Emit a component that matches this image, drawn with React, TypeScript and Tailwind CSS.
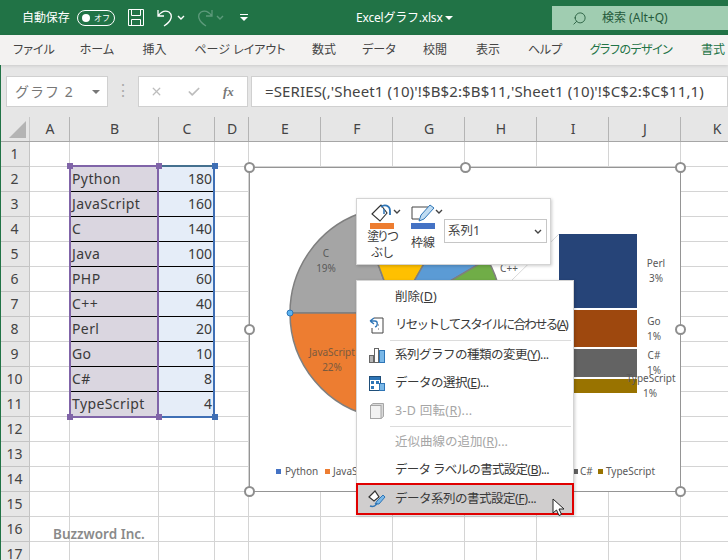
import React from 'react';
import { ChevronDown, Search, X, Check } from 'lucide-react';

const font = `font-['Noto_Sans','Noto_Sans_CJK_JP',sans-serif]`;

const tabs = [
  { label: 'ファイル', w: 'w-[66px]' },
  { label: 'ホーム', w: 'w-[60px]' },
  { label: '挿入', w: 'w-[55px]' },
  { label: 'ページ レイアウト', w: 'w-[116px]' },
  { label: '数式', w: 'w-[52px]' },
  { label: 'データ', w: 'w-[58px]' },
  { label: '校閲', w: 'w-[54px]' },
  { label: '表示', w: 'w-[52px]' },
  { label: 'ヘルプ', w: 'w-[62px]' },
];

const columns = [
  { label: 'A', w: 'w-[40px]' },
  { label: 'B', w: 'w-[89px]' },
  { label: 'C', w: 'w-[56px]' },
  { label: 'D', w: 'w-[34px]' },
  { label: 'E', w: 'w-[72px]' },
  { label: 'F', w: 'w-[72px]' },
  { label: 'G', w: 'w-[72px]' },
  { label: 'H', w: 'w-[72px]' },
  { label: 'I', w: 'w-[72px]' },
  { label: 'J', w: 'w-[72px]' },
  { label: 'K', w: 'w-[72px]' },
];

const data: [string, number][] = [
  ['Python', 180],
  ['JavaScript', 160],
  ['C', 140],
  ['Java', 100],
  ['PHP', 60],
  ['C++', 40],
  ['Perl', 20],
  ['Go', 10],
  ['C#', 8],
  ['TypeScript', 4],
];

const rows = Array.from({ length: 17 }, (_, i) => i + 1);

const cx = 146;
const cy = 145;
const r = 106;

// degrees run clockwise from the left edge of the pie
const slice = (from: number, to: number) => {
  const pt = (deg: number) => {
    const a = ((deg - 180) * Math.PI) / 180;
    return `${(cx + r * Math.cos(a)).toFixed(1)} ${(cy + r * Math.sin(a)).toFixed(1)}`;
  };
  return `M${cx} ${cy} L${pt(from)} A${r} ${r} 0 ${to - from > 180 ? 1 : 0} 1 ${pt(to)} Z`;
};

const pieSlices = [
  { from: 0, to: 69.8, fill: '#a5a5a5' },
  { from: 69.8, to: 119.6, fill: '#ffc000' },
  { from: 119.6, to: 149.5, fill: '#5b9bd5' },
  { from: 149.5, to: 169.4, fill: '#70ad47' },
  { from: 169.4, to: 190.3, fill: '#4472c4' },
  { from: 190.3, to: 280.1, fill: '#4472c4' },
  { from: 280.1, to: 360, fill: '#ed7d31' },
];

const Caret = ({ className = '' }: { className?: string }) => (
  <svg width="8" height="5" viewBox="0 0 8 5" fill="none" stroke="currentColor" strokeWidth="1.4" className={className}>
    <path d="M1 1 L4 4 L7 1" />
  </svg>
);

const Handle = ({ className }: { className: string }) => (
  <div className={`absolute w-[11px] h-[11px] rounded-full bg-white border-2 border-[#8e8e8e] ${className}`} />
);

const RangeDot = ({ className }: { className: string }) => (
  <div className={`absolute w-[6px] h-[6px] ${className}`} />
);

const ChartObject = () => (
  <div className="absolute left-[249px] top-[167px] w-[432px] h-[325px] bg-white border border-[#959595]">
    <svg width="430" height="323" viewBox="0 0 430 323" className="absolute left-0 top-0">
      {pieSlices.map((s) => (
        <path key={s.from} d={slice(s.from, s.to)} fill={s.fill} stroke="#7f7f7f" strokeWidth="1.5" />
      ))}
      <line x1="262" y1="112" x2="309" y2="66" stroke="#d9d9d9" />
      <rect x="309" y="66" width="78" height="74" fill="#264478" />
      <rect x="309" y="142" width="78" height="37" fill="#9e480e" />
      <rect x="309" y="181" width="78" height="28" fill="#636363" />
      <rect x="309" y="211" width="78" height="14" fill="#997300" />
      <g fontFamily="'Noto Sans', sans-serif" fontSize="10" fill="#595959" textAnchor="middle">
        <text x="76" y="89">C</text>
        <text x="76" y="104">19%</text>
        <text x="82" y="188" fill="#7a5a3e">JavaScript</text>
        <text x="82" y="203" fill="#7a5a3e">22%</text>
        <text x="406" y="99">Perl</text>
        <text x="406" y="114">3%</text>
        <text x="404" y="157">Go</text>
        <text x="404" y="172">1%</text>
        <text x="404" y="191">C#</text>
        <text x="404" y="206">1%</text>
        <text x="401" y="214">TypeScript</text>
        <text x="400" y="229">1%</text>
        <text x="259" y="104">C++</text>
      </g>
      <g fontFamily="'Noto Sans', sans-serif" fontSize="10" fill="#595959">
        <rect x="26" y="301" width="5" height="5" fill="#4472c4" />
        <text x="35" y="307">Python</text>
        <rect x="75" y="301" width="5" height="5" fill="#ed7d31" />
        <text x="83" y="307">JavaScript</text>
        <rect x="323" y="301" width="5" height="5" fill="#636363" />
        <text x="330" y="307">C#</text>
        <rect x="348" y="301" width="5" height="5" fill="#997300" />
        <text x="356" y="307">TypeScript</text>
      </g>
      <circle cx="40" cy="145" r="3" fill="#5cb3f0" stroke="#2e75b6" />
    </svg>
    <Handle className="-left-[6px] -top-[6px]" />
    <Handle className="left-[210px] -top-[6px]" />
    <Handle className="-right-[6px] -top-[6px]" />
    <Handle className="-left-[6px] top-[156px]" />
    <Handle className="-right-[6px] top-[156px]" />
    <Handle className="-left-[6px] -bottom-[6px]" />
    <Handle className="left-[210px] -bottom-[6px]" />
    <Handle className="-right-[6px] -bottom-[6px]" />
  </div>
);

const MiniToolbar = () => (
  <div className="absolute left-[356px] top-[198px] w-[195px] h-[67px] bg-white border border-[#d4d4d4] shadow-[1px_1px_3px_rgba(0,0,0,0.2)] flex items-start pl-[4px] pt-[5px] text-[12px] leading-[16px] text-[#3b3b3b]">
    <div className="w-[42px] flex flex-col items-center">
      <div className="w-full flex items-start h-[19px] pl-[8px]">
        <svg width="24" height="19" viewBox="0 0 24 19" fill="none" className="shrink-0">
          <path d="M3 10 L10 3 L12 1 L18 9 L11 17 Z" stroke="#333" strokeWidth="1.1" />
          <path d="M12 3 C15 0 21 1 21 7 L21 11" stroke="#2e75b6" strokeWidth="1.8" />
          <path d="M15 5 L15 10" stroke="#2e75b6" strokeWidth="1.5" />
        </svg>
        <Caret className="mt-[5px] shrink-0 text-[#444]" />
      </div>
      <div className="w-[24px] h-[6px] bg-[#ed7d31]" />
      <div className="tracking-[-2.2px] whitespace-nowrap">塗りつ</div>
      <div className="tracking-[-1px] whitespace-nowrap">ぶし</div>
    </div>
    <div className="w-[36px] ml-[2px] flex flex-col items-center">
      <div className="w-full flex items-start h-[19px] pl-[6px]">
        <svg width="24" height="19" viewBox="0 0 24 19" fill="none" className="shrink-0">
          <path d="M1 3 H17 M1 3 V15 H8" stroke="#444" strokeWidth="1" />
          <path d="M8 17 L10 11 L19 1 L23 4 L13 15 Z" fill="#bfdcf2" stroke="#2e75b6" />
        </svg>
        <Caret className="mt-[5px] shrink-0 text-[#444]" />
      </div>
      <div className="w-[24px] h-[6px] bg-[#4472c4] mb-[6px]" />
      <div>枠線</div>
    </div>
    <div className="ml-[3px] mt-[15px] w-[103px] h-[24px] border border-[#c6c6c6] flex items-center justify-between pl-[3px] pr-[4px] text-[12.5px] text-[#444]">
      <span>系列1</span>
      <Caret />
    </div>
  </div>
);

type ItemProps = {
  before: string;
  accel: string;
  after?: string;
  icon?: React.ReactNode;
  disabled?: boolean;
  iconClass?: string;
  textClass?: string;
  className?: string;
};

const MenuItem = ({ before, accel, after = ')', icon, disabled, iconClass = 'w-[38px]', textClass = '', className = 'h-[28px]' }: ItemProps) => (
  <div className={`flex items-center text-[12.5px] ${disabled ? 'text-[#a6a6a6]' : 'text-[#3a3a3a]'} ${className}`}>
    <div className={`flex justify-center pl-[1px] shrink-0 ${iconClass}`}>{icon}</div>
    <span className={`whitespace-nowrap ${textClass}`}>
      {before}(<u>{accel}</u>{after}
    </span>
  </div>
);

const ContextMenu = () => (
  <div className="absolute left-[356px] top-[280px] w-[218px] h-[235px] bg-white border border-[#d4d4d4] shadow-[1px_1px_3px_rgba(0,0,0,0.2)] pt-[2px]">
    <MenuItem before="削除" accel="D" />
    <MenuItem
      before="リセットしてスタイルに合わせる"
      accel="A"
      textClass="tracking-[-1.7px]"
      icon={
        <svg width="15" height="17" viewBox="0 0 15 17" fill="none">
          <path d="M5 1 H14 V16 H3 V11" stroke="#444" />
          <path d="M1 4 L5 1 M1 4 L5 7 M1 4 H6 C9 4 9 9 6 10" stroke="#2e75b6" strokeWidth="1.3" />
          <path d="M9 8 H11 M9 12 H11" stroke="#666" strokeDasharray="1 1" />
        </svg>
      }
    />
    <div className="ml-[33px] mr-[2px] h-px bg-[#dcdcdc] mt-[1px]" />
    <MenuItem
      before="系列グラフの種類の変更"
      accel="Y"
      after=")..."
      textClass="tracking-[-0.5px]"
      icon={
        <svg width="16" height="16" viewBox="0 0 16 16">
          <rect x="0.5" y="8.5" width="4" height="7" fill="#b5b5b5" stroke="#666" />
          <rect x="5.5" y="1.5" width="4" height="14" fill="#fff" stroke="#666" />
          <rect x="10.5" y="3.5" width="5" height="12" fill="#7ab8e8" stroke="#2e75b6" />
        </svg>
      }
    />
    <MenuItem
      before="データの選択"
      accel="E"
      after=")..."
      textClass="tracking-[-0.5px]"
      icon={
        <svg width="16" height="15" viewBox="0 0 16 15">
          <rect x="0.5" y="0.5" width="11" height="14" fill="#fff" stroke="#1f4e79" />
          <rect x="1" y="1" width="10" height="3" fill="#2e75b6" />
          <rect x="2" y="5" width="3" height="3" fill="#2e75b6" />
          <rect x="7" y="5" width="3" height="3" fill="#2e75b6" />
          <rect x="2" y="10" width="3" height="3" fill="#2e75b6" />
          <rect x="10.5" y="7.5" width="5" height="7" fill="#7ab8e8" stroke="#2e75b6" />
        </svg>
      }
    />
    <MenuItem
      disabled
      before="3-D 回転"
      accel="R"
      after=")..."
      textClass="tracking-[0.3px]"
      icon={
        <svg width="14" height="16" viewBox="0 0 14 16">
          <path d="M0.5 2.5 L3 0.5 H13.5 V13.5 L11 15.5 H0.5 Z" fill="#d9d9d9" stroke="#a6a6a6" />
          <rect x="0.5" y="2.5" width="10.5" height="13" fill="#f2f2f2" stroke="#a6a6a6" />
        </svg>
      }
    />
    <div className="ml-[33px] mr-[2px] h-px bg-[#dcdcdc] my-[1px]" />
    <MenuItem disabled before="近似曲線の追加" accel="R" after=")..." />
    <MenuItem before="データ ラベルの書式設定" accel="B" after=")..." textClass="tracking-[-0.7px]" />
    <MenuItem
      className="h-[32px] -mt-px -mx-px bg-[#d0cece] border-2 border-[#e00000]"
      iconClass="w-[37px]"
      before="データ系列の書式設定"
      accel="F"
      after=")..."
      textClass="tracking-[-0.5px]"
      icon={
        <svg width="18" height="18" viewBox="0 0 18 18" fill="none">
          <path d="M1 7 L7 1 L11 7 L6 11 Z" fill="#fff" stroke="#333" strokeWidth="1.2" />
          <path d="M7 14 L9 11 L15 5 L17 7 L11 14 Z" fill="#7ab8e8" stroke="#2e75b6" />
          <path d="M2 16 C5 17 8 16 9 13" stroke="#2e75b6" strokeWidth="1.6" />
        </svg>
      }
    />
    <svg width="14" height="19" viewBox="0 0 14 19" className="absolute left-[195px] top-[217px]">
      <path d="M1 1 V15 L4.5 12 L7 17.5 L9.5 16.4 L7 11 H12 Z" fill="#fff" stroke="#222" />
    </svg>
  </div>
);

const App = () => {
  return (
    <div className={`relative w-[728px] h-[560px] overflow-hidden bg-white ${font}`}>
      {/* Title bar */}
      <div className="h-[35px] bg-[#217346] text-white flex items-center pl-[22px] text-[12px] whitespace-nowrap">
        <span className="w-[48px] shrink-0 tracking-[-0.1px]">自動保存</span>
        <div className="ml-[7px] w-[38px] h-[16px] shrink-0 rounded-full border border-white flex items-center pl-[4px] gap-[4px]">
          <div className="w-[8px] h-[8px] rounded-full bg-white" />
          <span className="text-[8px]">オフ</span>
        </div>
        <svg width="16" height="17" viewBox="0 0 16 17" fill="none" stroke="#fff" className="ml-[13px] shrink-0">
          <path d="M0.5 0.5 H15.5 V16.5 H0.5 Z M3.5 0.5 V6.5 H12.5 V0.5 M3.5 16.5 V10.5 H12.5 V16.5" />
        </svg>
        <svg width="16" height="18" viewBox="0 0 16 18" fill="none" stroke="#fff" strokeWidth="1.3" className="ml-[13px] shrink-0">
          <path d="M1 1 V7 H7 M1 7 C4 3 8 1 12 3 C16 6 15 12 7 17" />
        </svg>
        <Caret className="ml-[4px] shrink-0" />
        <svg width="16" height="18" viewBox="0 0 16 18" fill="none" stroke="#5d9a7b" strokeWidth="1.3" className="ml-[12px] shrink-0">
          <path d="M15 1 V7 H9 M15 7 C12 3 8 1 4 3 C0 6 1 12 9 17" />
        </svg>
        <Caret className="ml-[3px] shrink-0 text-[#5d9a7b]" />
        <svg width="8" height="7" viewBox="0 0 8 7" fill="#fff" className="ml-[16px] shrink-0">
          <rect x="0" y="0" width="8" height="1" />
          <path d="M0 3 H8 L4 7 Z" />
        </svg>
        <span className="ml-[108px] w-[83px] shrink-0 tracking-[-0.2px]">Excelグラフ.xlsx</span>
        <svg width="8" height="4" viewBox="0 0 8 4" fill="#fff" className="ml-[6px] shrink-0">
          <path d="M0 0 H8 L4 4 Z" />
        </svg>
        <div className="ml-[99px] w-[176px] h-[24px] mt-[1px] shrink-0 bg-[#a0cdb1] text-[#245a3b] flex items-center pl-[20px]">
          <Search size={15} strokeWidth={1.4} className="-scale-x-100" />
          <span className="ml-[15px]">検索 (Alt+Q)</span>
        </div>
      </div>

      {/* Ribbon tabs */}
      <div className="relative h-[30px] bg-[#f3f2f1] flex items-center pl-[1px] text-[12px] text-[#444] shadow-[0_1px_3px_rgba(0,0,0,0.12)]">
        {tabs.map((t) => (
          <div key={t.label} className={`${t.w} text-center whitespace-nowrap [font-feature-settings:'palt']`}>{t.label}</div>
        ))}
        <div className="ml-[11px] w-[88px] text-center text-[#217346] whitespace-nowrap tracking-[-0.5px] [font-feature-settings:'palt']">グラフのデザイン</div>
        <div className="ml-[26px] text-[#217346] whitespace-nowrap">書式</div>
      </div>

      {/* Formula bar */}
      <div className="h-[52px] bg-[#e6e6e6] pt-[11px] pl-[6px] flex items-start">
        <div className="w-[102px] h-[31px] bg-white border border-[#d0d0d0] flex items-center justify-between pl-[8px] pr-[7px] text-[14px] text-[#777]">
          <span className="tracking-[1px]">グラフ 2</span>
          <svg width="8" height="4" viewBox="0 0 8 4" fill="#777"><path d="M0 0 H8 L4 4 Z" /></svg>
        </div>
        <div className="w-[30px] text-center text-[#aaa] leading-[28px]">⋮</div>
        <div className="w-[110px] h-[31px] bg-white border border-[#d0d0d0] flex items-center pl-[11px] text-[#bdbdbd]">
          <X size={13} strokeWidth={2.4} />
          <Check size={14} strokeWidth={3} className="ml-[24px]" />
          <span className="ml-[22px] text-[13px] italic font-['Liberation_Serif',serif] font-bold text-[#777]">fx</span>
        </div>
        <div className="ml-[3px] flex-1 h-[31px] bg-white border border-[#d0d0d0] flex items-center pl-[13px] text-[15px] tracking-[0.13px] text-[#444] whitespace-nowrap">
          =SERIES(,'Sheet1 (10)'!$B$2:$B$11,'Sheet1 (10)'!$C$2:$C$11,1)
        </div>
      </div>

      {/* Column headers */}
      <div className="h-[25px] flex bg-[#e6e6e6] border-b border-[#a6a6a6] text-[14px] text-[#444]">
        <div className="w-[30px] shrink-0 relative border-r border-[#c8c8c8]">
          <div className="absolute right-[3px] bottom-[3px] w-0 h-0 border-l-[17px] border-l-transparent border-b-[17px] border-b-[#b4b4b4]" />
        </div>
        {columns.map((c) => (
          <div key={c.label} className={`${c.w} shrink-0 text-center pl-[1px] leading-[23px] border-r border-[#b4b4b4]`}>{c.label}</div>
        ))}
      </div>

      {/* Sheet */}
      <div className="flex flex-col">
        {rows.map((n) => (
          <div key={n} className="h-[25px] flex shrink-0 text-[14px] text-[#3a3a3a]">
            <div className="w-[30px] shrink-0 bg-[#e6e6e6] border-r border-b border-[#c4c4c4] text-center leading-[24px] text-[14px] text-[#444]">{n}</div>
            {columns.map((c) => {
              const row = data[n - 2];
              return (
                <div key={c.label} className={`${c.w} shrink-0 border-r border-b border-[#d4d4d4] leading-[24px] px-[2px] whitespace-nowrap ${row && c.label === 'B' ? 'bg-[#dad6e0] border-b-black tracking-[0.4px]' : ''} ${row && c.label === 'C' ? 'bg-[#e5edf8] border-b-black text-right' : ''}`}>
                  {row && c.label === 'B' ? row[0] : null}
                  {row && c.label === 'C' ? row[1] : null}
                </div>
              );
            })}
          </div>
        ))}
      </div>

      {/* Chart range highlight */}
      <div className="absolute left-[69px] top-[165px] w-[90px] h-[253px] border-2 border-[#8064a8]" />
      <div className="absolute left-[159px] top-[165px] w-[56px] h-[253px] border-y-2 border-r-2 border-t-[#44708f] border-b-[#3f6fb5] border-r-[#3f6fb5]" />
      <RangeDot className="left-[67px] top-[163px] bg-[#8064a8]" />
      <RangeDot className="left-[156px] top-[163px] bg-[#8064a8]" />
      <RangeDot className="left-[212px] top-[163px] bg-[#3f6fb5]" />
      <RangeDot className="left-[67px] top-[414px] bg-[#8064a8]" />
      <RangeDot className="left-[156px] top-[414px] bg-[#8064a8]" />
      <RangeDot className="left-[212px] top-[414px] bg-[#3f6fb5]" />

      <ChartObject />
      <MiniToolbar />
      <ContextMenu />

      <div className="absolute left-0 top-[65px] bottom-0 w-px bg-[#217346]" />
      <div className="absolute left-[53px] top-[524px] text-[13.5px] font-semibold text-[#8a8a8a]">Buzzword Inc.</div>
    </div>
  );
};

export default App;
